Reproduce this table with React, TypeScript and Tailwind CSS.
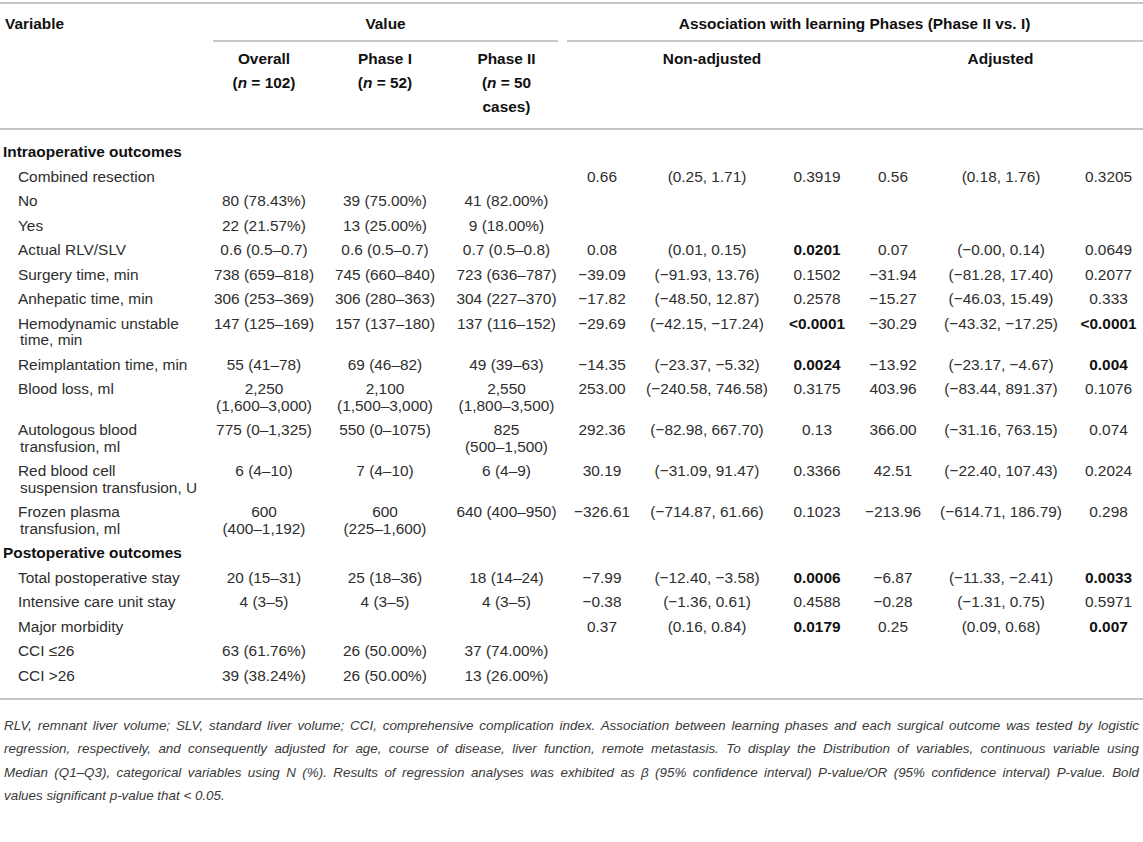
const M = "\u2212";

type Row = {
  label: string[];
  section?: boolean;
  vals?: (string | string[])[];
  stats?: string[];
  bold?: number[];
};

const rows: Row[] = [
  { label: ["Intraoperative outcomes"], section: true },
  {
    label: ["Combined resection"],
    stats: ["0.66", "(0.25, 1.71)", "0.3919", "0.56", "(0.18, 1.76)", "0.3205"],
  },
  { label: ["No"], vals: ["80 (78.43%)", "39 (75.00%)", "41 (82.00%)"] },
  { label: ["Yes"], vals: ["22 (21.57%)", "13 (25.00%)", "9 (18.00%)"] },
  {
    label: ["Actual RLV/SLV"],
    vals: ["0.6 (0.5–0.7)", "0.6 (0.5–0.7)", "0.7 (0.5–0.8)"],
    stats: ["0.08", "(0.01, 0.15)", "0.0201", "0.07", `(${M}0.00, 0.14)`, "0.0649"],
    bold: [2],
  },
  {
    label: ["Surgery time, min"],
    vals: ["738 (659–818)", "745 (660–840)", "723 (636–787)"],
    stats: [`${M}39.09`, `(${M}91.93, 13.76)`, "0.1502", `${M}31.94`, `(${M}81.28, 17.40)`, "0.2077"],
  },
  {
    label: ["Anhepatic time, min"],
    vals: ["306 (253–369)", "306 (280–363)", "304 (227–370)"],
    stats: [`${M}17.82`, `(${M}48.50, 12.87)`, "0.2578", `${M}15.27`, `(${M}46.03, 15.49)`, "0.333"],
  },
  {
    label: ["Hemodynamic unstable", "time, min"],
    vals: ["147 (125–169)", "157 (137–180)", "137 (116–152)"],
    stats: [`${M}29.69`, `(${M}42.15, ${M}17.24)`, "<0.0001", `${M}30.29`, `(${M}43.32, ${M}17.25)`, "<0.0001"],
    bold: [2, 5],
  },
  {
    label: ["Reimplantation time, min"],
    vals: ["55 (41–78)", "69 (46–82)", "49 (39–63)"],
    stats: [`${M}14.35`, `(${M}23.37, ${M}5.32)`, "0.0024", `${M}13.92`, `(${M}23.17, ${M}4.67)`, "0.004"],
    bold: [2, 5],
  },
  {
    label: ["Blood loss, ml"],
    vals: [["2,250", "(1,600–3,000)"], ["2,100", "(1,500–3,000)"], ["2,550", "(1,800–3,500)"]],
    stats: ["253.00", `(${M}240.58, 746.58)`, "0.3175", "403.96", `(${M}83.44, 891.37)`, "0.1076"],
  },
  {
    label: ["Autologous blood", "transfusion, ml"],
    vals: ["775 (0–1,325)", "550 (0–1075)", ["825", "(500–1,500)"]],
    stats: ["292.36", `(${M}82.98, 667.70)`, "0.13", "366.00", `(${M}31.16, 763.15)`, "0.074"],
  },
  {
    label: ["Red blood cell", "suspension transfusion, U"],
    vals: ["6 (4–10)", "7 (4–10)", "6 (4–9)"],
    stats: ["30.19", `(${M}31.09, 91.47)`, "0.3366", "42.51", `(${M}22.40, 107.43)`, "0.2024"],
  },
  {
    label: ["Frozen plasma", "transfusion, ml"],
    vals: [["600", "(400–1,192)"], ["600", "(225–1,600)"], "640 (400–950)"],
    stats: [`${M}326.61`, `(${M}714.87, 61.66)`, "0.1023", `${M}213.96`, `(${M}614.71, 186.79)`, "0.298"],
  },
  { label: ["Postoperative outcomes"], section: true },
  {
    label: ["Total postoperative stay"],
    vals: ["20 (15–31)", "25 (18–36)", "18 (14–24)"],
    stats: [`${M}7.99`, `(${M}12.40, ${M}3.58)`, "0.0006", `${M}6.87`, `(${M}11.33, ${M}2.41)`, "0.0033"],
    bold: [2, 5],
  },
  {
    label: ["Intensive care unit stay"],
    vals: ["4 (3–5)", "4 (3–5)", "4 (3–5)"],
    stats: [`${M}0.38`, `(${M}1.36, 0.61)`, "0.4588", `${M}0.28`, `(${M}1.31, 0.75)`, "0.5971"],
  },
  {
    label: ["Major morbidity"],
    stats: ["0.37", "(0.16, 0.84)", "0.0179", "0.25", "(0.09, 0.68)", "0.007"],
    bold: [2, 5],
  },
  { label: ["CCI ≤26"], vals: ["63 (61.76%)", "26 (50.00%)", "37 (74.00%)"] },
  { label: ["CCI >26"], vals: ["39 (38.24%)", "26 (50.00%)", "13 (26.00%)"] },
];

const widths = [205, 118, 124, 119, 72, 138, 82, 70, 146, 69];

// footnote lines are broken where the journal breaks them
const note = [
  "RLV, remnant liver volume; SLV, standard liver volume; CCI, comprehensive complication index. Association between learning phases and each surgical outcome was tested by logistic",
  "regression, respectively, and consequently adjusted for age, course of disease, liver function, remote metastasis. To display the Distribution of variables, continuous variable using",
  "Median (Q1–Q3), categorical variables using N (%). Results of regression analyses was exhibited as β (95% confidence interval) P-value/OR (95% confidence interval) P-value. Bold",
  "values significant p-value that < 0.05.",
];

const Lines = ({ v }: { v: string | string[] }) =>
  Array.isArray(v) ? (
    <>
      {v.map((l, i) => (
        <div key={i}>{l}</div>
      ))}
    </>
  ) : (
    <>{v}</>
  );

export default function App() {
  return (
    <div
      className="w-[1143px] bg-white pt-[2px] text-[#2e2e2e]"
      style={{ fontFamily: '"Liberation Sans", Arial, sans-serif' }}
    >
      <table className="w-[1143px] table-fixed border-collapse text-[15.4px]">
        <colgroup>
          {widths.map((w, i) => (
            <col key={i} style={{ width: w }} />
          ))}
        </colgroup>
        <thead className="font-bold text-[#111]">
          <tr className="border-t-2 border-[#c4c4c4]">
            <th className="pl-[5px] pt-[8px] text-left align-top leading-[24px]">Variable</th>
            <th colSpan={3} className="pt-[8px] align-top leading-[24px]">
              <div>Value</div>
              <div className="mx-[8px] mt-[4px] h-[2px] bg-[#c8c8c8]" />
            </th>
            <th colSpan={6} className="pt-[8px] align-top leading-[24px]">
              <div>Association with learning Phases (Phase II vs. I)</div>
              <div className="ml-[1px] mt-[4px] h-[2px] bg-[#c8c8c8]" />
            </th>
          </tr>
          <tr className="border-b-2 border-[#c4c4c4]">
            <th />
            <th className="pb-[9px] pt-[5px] align-top leading-[24px]">
              Overall
              <br />(<i>n</i> = 102)
            </th>
            <th className="pb-[9px] pt-[5px] align-top leading-[24px]">
              Phase I
              <br />(<i>n</i> = 52)
            </th>
            <th className="pb-[9px] pt-[5px] align-top leading-[24px]">
              Phase II
              <br />(<i>n</i> = 50
              <br />
              cases)
            </th>
            <th colSpan={3} className="pb-[9px] pt-[5px] align-top leading-[24px]">
              Non-adjusted
            </th>
            <th colSpan={3} className="pb-[9px] pt-[5px] align-top leading-[24px]">
              Adjusted
            </th>
          </tr>
        </thead>
        <tbody className="leading-[16.5px]">
          <tr>
            <td colSpan={10} className="h-[11px] p-0" />
          </tr>
          {rows.map((r, i) => (
            <tr key={i}>
              <td
                className={
                  r.section
                    ? "whitespace-nowrap py-[4px] pl-[3px] align-top font-bold text-[#111]"
                    : "whitespace-nowrap py-[4px] pl-[18px] align-top"
                }
                colSpan={r.section ? 10 : 1}
              >
                {r.label.map((l, j) => (
                  <div key={j} className={j > 0 ? "pl-[2px]" : ""}>
                    {l}
                  </div>
                ))}
              </td>
              {!r.section &&
                [0, 1, 2].map((k) => (
                  <td key={k} className="whitespace-nowrap py-[4px] text-center align-top">
                    {r.vals ? <Lines v={r.vals[k]} /> : null}
                  </td>
                ))}
              {!r.section &&
                [0, 1, 2, 3, 4, 5].map((k) => (
                  <td
                    key={k}
                    className={
                      r.bold?.includes(k)
                        ? "whitespace-nowrap py-[4px] text-center align-top font-bold text-[#111]"
                        : "whitespace-nowrap py-[4px] text-center align-top"
                    }
                  >
                    {r.stats ? r.stats[k] : null}
                  </td>
                ))}
            </tr>
          ))}
          <tr>
            <td colSpan={10} className="h-[10px] p-0" />
          </tr>
        </tbody>
      </table>
      <div className="border-t-2 border-[#c4c4c4] px-[4px] pt-[14px] text-[13.4px] italic leading-[23.4px] text-[#3a3a3a]">
        {note.map((l, i) => (
          <div
            key={i}
            className={i < note.length - 1 ? "text-justify [text-align-last:justify]" : "text-left"}
          >
            {l}
          </div>
        ))}
      </div>
    </div>
  );
}
